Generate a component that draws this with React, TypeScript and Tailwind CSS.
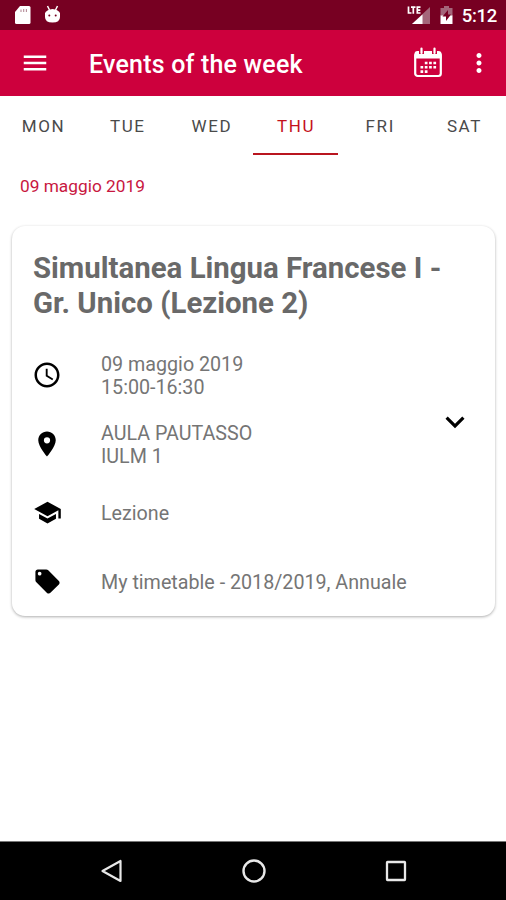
import type { ReactNode } from 'react';
import { MdKeyboardArrowDown, MdLocalOffer, MdMenu, MdMoreVert, MdPlace, MdSchedule, MdSchool } from 'react-icons/md';

const days = ['MON', 'TUE', 'WED', 'THU', 'FRI', 'SAT'];
const activeDay = 'THU';

function StatusBar() {
  return (
    <div className="h-[30px] shrink-0 bg-[#770022] flex items-center justify-between pl-[14px] pr-[9px]">
      <div className="flex items-center gap-[13px]">
        <svg className="w-[17px] h-[20px]" viewBox="0 0 17 20" fill="#fff">
          <path d="M6 1h9a1.500 1.500 0 0 1 1.500 1.500v15a1.500 1.500 0 0 1-1.500 1.500H2.500A1.500 1.500 0 0 1 1 17.500V7z" />
          <path d="M7 4.500v2.500M9.700 4v3M12.400 4v3" stroke="#b58b98" strokeWidth="1.100" />
        </svg>
        <svg className="w-[17px] h-[20px]" viewBox="0 0 17 20">
          <path d="M3.500 1l2 4M13.500 1l-2 4" stroke="#fff" strokeWidth="1.500" />
          <path d="M1 8q2-3.500 7.500-4Q14 4.500 16 8v4q0 5.500-7.500 5.500T1 12z" fill="#fff" />
          <circle cx="5.300" cy="10.500" r="1" fill="#770022" />
          <circle cx="11.700" cy="10.500" r="1" fill="#770022" />
        </svg>
      </div>
      <div className="flex items-center">
        <svg className="w-[24px] h-[20px] mr-[9px]" viewBox="0 0 24 20">
          <path d="M23 2v17H5z" fill="#a4667a" />
          <path d="M15.500 9.500V19H5z" fill="#fff" />
          <path
            d="M1.500 1.500v6.500h3M4 2.200h4.500M6.300 2.200v6.500M13.500 2.200h-3.200v5.800h3.200M10.300 5.100h3"
            fill="none"
            stroke="#fff"
            strokeWidth="1.700"
          />
        </svg>
        <svg className="w-[13px] h-[20px] mr-[9px]" viewBox="0 0 13 20">
          <path d="M4 1h5v2h3.500v8H.5V3H4z" fill="#a4667a" />
          <path d="M.5 10.500h12V19H.5z" fill="#fff" />
          <path d="M8 5l-5.500 6.500h3.500V16l5-6.500H8z" fill="#770022" />
        </svg>
        <span className="text-[18.500px] leading-none font-medium text-white tracking-[-0.3px] pt-[2px]">5:12</span>
      </div>
    </div>
  );
}

function CalendarIcon() {
  return (
    <svg className="w-[30px] h-[32px]" viewBox="0 0 30 32" fill="none">
      <rect x="2.200" y="6" width="25.600" height="23" rx="2.500" stroke="#fff" strokeWidth="2.200" />
      <path d="M1.500 11.500V7q0-3 3-3h21q3 0 3 3v4.500z" fill="#fff" />
      <path d="M8.500 1v6M21.500 1v6" stroke="#cd003d" strokeWidth="5" />
      <path d="M8.500 1.500v4.500M21.500 1.500v4.500" stroke="#fff" strokeWidth="2.200" strokeLinecap="round" />
      <path d="M11.800 16h12.500M7.500 20.300h16.500M7.500 24.600h8" stroke="#fff" strokeWidth="2.600" strokeDasharray="2.700 1.600" />
    </svg>
  );
}

function AppBar() {
  return (
    <header className="h-[66px] shrink-0 bg-[#cd003d] text-white flex items-center pl-5">
      <MdMenu className="w-[30px] h-[30px]" />
      <h1 className="ml-[39px] mt-[3px] text-[25px] font-medium tracking-[0.2px] whitespace-nowrap">
        Events of the week
      </h1>
      <div className="ml-auto flex items-center pr-[12px]">
        <CalendarIcon />
        <MdMoreVert className="w-[30px] h-[30px] ml-[21px]" />
      </div>
    </header>
  );
}

function Tabs() {
  return (
    <nav className="h-[60px] shrink-0 grid grid-cols-6 pl-[1px]">
      {days.map((day) => (
        <div
          key={day}
          className={
            day === activeDay
              ? 'flex items-center justify-center border-b-2 border-[#b9151f] mb-px pt-[4px] pl-[1px] text-[17px] tracking-[1.6px] text-[#c4101c]'
              : 'flex items-center justify-center border-b-2 border-transparent mb-px pt-[4px] pl-[1px] text-[17px] tracking-[1.6px] text-[#4a4a4a]'
          }
        >
          {day}
        </div>
      ))}
    </nav>
  );
}

function DetailRow({ icon, children }: { icon: ReactNode; children: ReactNode }) {
  return (
    <div className="h-[69px] flex items-center">
      <div className="w-[69px] shrink-0 pl-px pb-[2px] text-black">{icon}</div>
      <div className="text-[19.700px] leading-[23px] text-[#757575] whitespace-nowrap">{children}</div>
    </div>
  );
}

function EventCard() {
  return (
    <article className="ml-[12px] mr-[11px] h-[390px] rounded-[13px] bg-white shadow-[0_1px_3px_rgba(0,0,0,0.32)] pl-5 pt-[25px]">
      <h2 className="ml-px text-[29.400px] leading-[35px] font-bold text-[#696969] whitespace-nowrap">
        Simultanea Lingua Francese I -
        <br />
        Gr. Unico (Lezione 2)
      </h2>
      <div className="mt-5 flex justify-between">
        <div>
          <DetailRow icon={<MdSchedule className="w-[30px] h-[30px] -ml-px" />}>
            09 maggio 2019
            <br />
            15:00-16:30
          </DetailRow>
          <DetailRow icon={<MdPlace className="w-[30px] h-[30px] -ml-px" />}>
            AULA PAUTASSO
            <br />
            IULM 1
          </DetailRow>
          <DetailRow icon={<MdSchool className="w-[29px] h-[29px]" />}>Lezione</DetailRow>
          <DetailRow icon={<MdLocalOffer className="w-[29px] h-[29px]" />}>My timetable - 2018/2019, Annuale</DetailRow>
        </div>
        <MdKeyboardArrowDown className="w-[38px] h-[38px] mt-[62px] mr-[21px] text-black" />
      </div>
    </article>
  );
}

function NavigationBar() {
  return (
    <footer className="h-[59px] shrink-0 border-t border-[#777] bg-black">
      <div className="h-full flex items-center justify-between pl-[100px] pr-[98px]">
        <svg className="w-6 h-[26px]" viewBox="0 0 24 26" fill="none" stroke="#e8e8e8" strokeWidth="2.200">
          <path d="M20.500 3v20L2.500 13z" strokeLinejoin="round" />
        </svg>
        <svg className="w-[26px] h-[26px]" viewBox="0 0 26 26" fill="none" stroke="#e8e8e8" strokeWidth="2.400">
          <circle cx="13" cy="13" r="10.500" />
        </svg>
        <svg className="w-[24px] h-[24px]" viewBox="0 0 24 24" fill="none" stroke="#e8e8e8" strokeWidth="2.300">
          <rect x="3" y="3" width="18" height="18" rx="0.500" />
        </svg>
      </div>
    </footer>
  );
}

export default function App() {
  return (
    <div className="w-full h-[900px] flex flex-col bg-white overflow-hidden font-['Roboto',sans-serif]">
      <StatusBar />
      <AppBar />
      <Tabs />
      <main className="flex-1">
        <p className="h-[70px] pl-5 pt-[18px] text-[17.300px] leading-6 text-[#c8173f]">09 maggio 2019</p>
        <EventCard />
      </main>
      <NavigationBar />
    </div>
  );
}
